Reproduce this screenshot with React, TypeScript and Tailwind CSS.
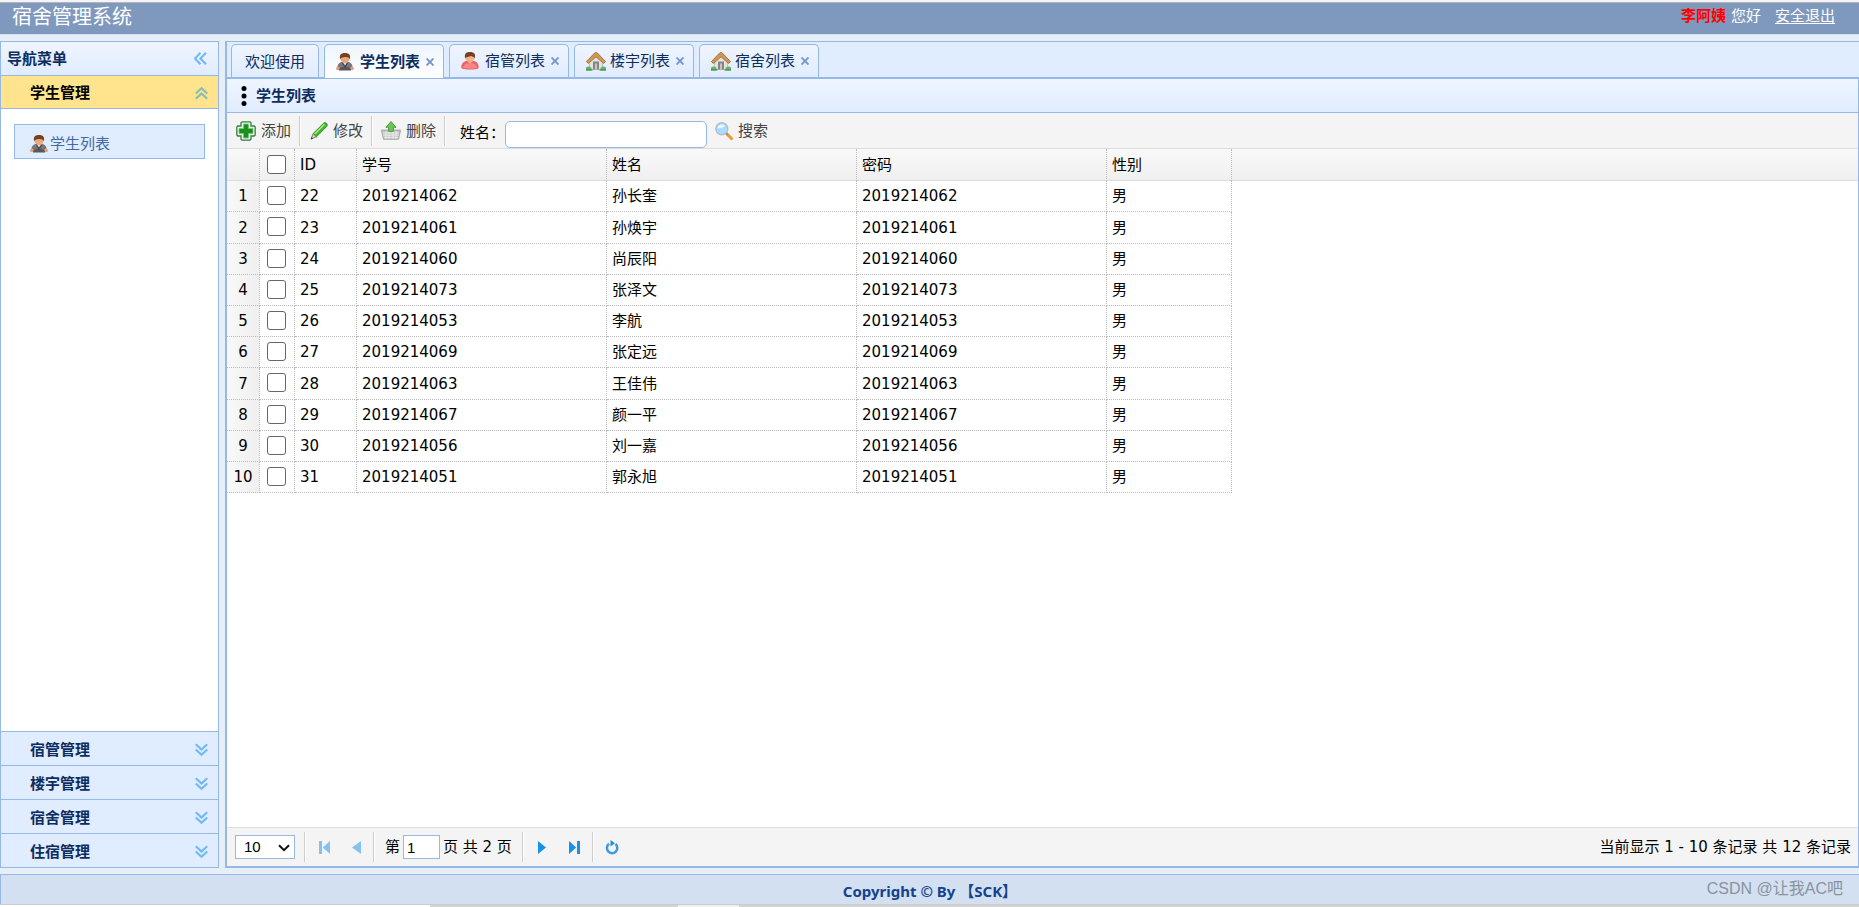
import React, { useState } from 'react';

interface Student {
  id: number;
  number: string;
  name: string;
  password: string;
  gender: string;
}

const students: Student[] = [
  { id: 22, number: '2019214062', name: '孙长奎', password: '2019214062', gender: '男' },
  { id: 23, number: '2019214061', name: '孙焕宇', password: '2019214061', gender: '男' },
  { id: 24, number: '2019214060', name: '尚辰阳', password: '2019214060', gender: '男' },
  { id: 25, number: '2019214073', name: '张泽文', password: '2019214073', gender: '男' },
  { id: 26, number: '2019214053', name: '李航', password: '2019214053', gender: '男' },
  { id: 27, number: '2019214069', name: '张定远', password: '2019214069', gender: '男' },
  { id: 28, number: '2019214063', name: '王佳伟', password: '2019214063', gender: '男' },
  { id: 29, number: '2019214067', name: '颜一平', password: '2019214067', gender: '男' },
  { id: 30, number: '2019214056', name: '刘一嘉', password: '2019214056', gender: '男' },
  { id: 31, number: '2019214051', name: '郭永旭', password: '2019214051', gender: '男' },
];

const StudentIcon = () => (
  <svg viewBox="0 0 18 18" className="h-[18px] w-[18px] shrink-0">
    <path d="M1.500 16.500C1 12 2.500 9.500 6 9h6c3.500.5 5 3 4.500 7.500z" fill="#77777b" />
    <path d="M0 15.500c0-2.200 3.800-2.400 4 0 .2 2.200-4 2.200-4 0zM14 15.500c.2-2.400 4-2.200 4 0 0 2.200-4.200 2.200-4 0z" fill="#e0a07a" />
    <path d="M3 17.500c-.3-2.500 2-3.800 6-3.800s6.300 1.300 6 3.800z" fill="#57575d" />
    <path d="M5.500 9.500 9 14.500l3.500-5z" fill="#3f3f46" />
    <path d="M6.800 9.200h4.400L9 12.500z" fill="#ece8e4" />
    <ellipse cx="9" cy="6" rx="4.400" ry="4.300" fill="#e8a880" />
    <path d="M4.200 6.500C3 2 5 0 9 0s6 2 4.800 6.500C13.500 4.800 12 4 9.500 4S4.700 4.700 4.200 6.500z" fill="#774020" />
  </svg>
);

const ManagerIcon = () => (
  <svg viewBox="0 0 18 18" className="h-[18px] w-[18px] shrink-0">
    <path d="M.3 16C0 12 2 9.500 5.500 9h7c3.500.5 5.500 3 5.200 7-1.500 2-15.900 2-17.400 0z" fill="#ed6468" />
    <path d="M2 15.500c1-3.200 3-4.200 7-4.200s6 1 7 4.200c-2 1.300-12 1.300-14 0z" fill="#fd8584" />
    <path d="M6 8.500h6L9 12z" fill="#eeb088" />
    <ellipse cx="9" cy="6" rx="4.400" ry="4.300" fill="#f0b48c" />
    <path d="M4.200 6.500C3 2 5 0 9 0s6 2 4.800 6.500C13.300 5 12 4.500 10 4 8 5 4.700 4.700 4.200 6.500z" fill="#774020" />
  </svg>
);

const HouseIcon = () => (
  <svg viewBox="0 0 20 19" className="h-[19px] w-5 shrink-0">
    <path d="M3.500 9 10 3l6.500 6v8.500h-13z" fill="#e5e3e2" stroke="#b5b0ac" strokeWidth=".7" />
    <path d="M7 9.500h6v8H7z" fill="#858487" />
    <path d="M9 11.500h2v6H9z" fill="#c9c5c2" />
    <path d="M0 15.500c2-1.500 4-1 5.500.5v2.500H0zM20 15.500c-2-1.500-4-1-5.500.5v2.500H20z" fill="#65b565" />
    <path d="M0 17.300h6.500v1.200H0zM13.500 17.300H20v1.200h-6.500z" fill="#3c9550" />
    <path d="M.4 9.600 8.600 1.100Q10-.2 11.400 1.100l8.200 8.500-2 1.900L10 4.800 2.400 11.500z" fill="#cf9854" stroke="#a06c36" strokeWidth=".9" />
  </svg>
);

const AddIcon = () => (
  <svg viewBox="0 0 20 20" className="h-5 w-5 shrink-0">
    <path d="M6 .8h8l1 1v3.200h3.200l1 1v8l-1 1H15v3.200l-1 1H6l-1-1V15H1.800l-1-1V6l1-1H5V1.800z" fill="#e7f5e5" stroke="#397c48" strokeWidth="1.300" />
    <path d="M7.500 3h5v4.500H17v5h-4.500V17h-5v-4.500H3v-5h4.500z" fill="#19911d" stroke="#7ac77a" strokeWidth=".8" />
  </svg>
);

const PencilIcon = () => (
  <svg viewBox="0 0 18 18" className="h-[18px] w-[18px] shrink-0">
    <path d="M1 17 3.200 11.500 6.500 14.800z" fill="#ddd5b0" stroke="#57743f" strokeWidth=".8" />
    <path d="M.7 17.400 1.600 15l1.500 1.500z" fill="#373b36" />
    <path d="M3.200 11.500 13.500 1.300Q15-.1 16.500 1.300t.2 3.200L6.500 14.800z" fill="#43b62f" stroke="#348c2b" strokeWidth=".9" />
    <path d="M4.700 12 14.500 2.300" stroke="#a9ed84" strokeWidth="1.500" />
  </svg>
);

const RemoveIcon = () => (
  <svg viewBox="0 0 20 19" className="h-[19px] w-5 shrink-0">
    <path d="M.5 9.500h19l-2 8.800h-15z" fill="#c6c6c6" stroke="#9b9b9b" strokeWidth=".8" />
    <path d="M2 12h16M2 14.200h16M3 16.400h14M5 10v8M8 10v8M12 10v8M15 10v8" stroke="#f1f1f1" strokeWidth=".8" />
    <path d="M.3 8.500h19.400v1.600H.3z" fill="#b0b0b0" />
    <path d="m10 .5 5 5.800h-2.600v4H7.600v-4H5z" fill="#6fc458" stroke="#3c9a3a" strokeWidth=".9" />
  </svg>
);

const SearchIcon = () => (
  <svg viewBox="0 0 18 18" className="h-[18px] w-[18px] shrink-0">
    <path d="m11 11 5.500 5.500" stroke="#ec9a31" strokeWidth="3" strokeLinecap="round" />
    <path d="m10.800 10.800 1.800 1.800" stroke="#8c8c91" strokeWidth="1.800" />
    <circle cx="6.800" cy="6.800" r="6" fill="#a9dcff" stroke="#b5bcd0" strokeWidth="1.400" />
    <path d="M2.500 6.500C3 3.500 5 2.200 7.500 2.500s3 2 .8 2.700-3.500.6-5.800 1.300z" fill="#eaf8ff" />
  </svg>
);

const MoreIcon = () => (
  <svg viewBox="0 0 6 20" className="h-5 w-1.5 shrink-0">
    <circle cx="3" cy="2.500" r="2.500" />
    <circle cx="3" cy="10" r="2.500" />
    <circle cx="3" cy="17.500" r="2.500" />
  </svg>
);

const chevrons = {
  left: 'M6.500.8.9 6.500l5.600 5.700M12 .8 6.400 6.500l5.600 5.700',
  up: 'M.8 6.500 6.500 1.200l5.700 5.300M.8 11.800 6.500 6.500l5.700 5.300',
  down: 'M.8 1.200 6.500 6.500l5.700-5.300M.8 6.500l5.700 5.300 5.700-5.300',
};

const Chevrons = ({ to, color = '#72b9f2' }: { to: keyof typeof chevrons; color?: string }) => (
  <svg viewBox="0 0 13 13" className="h-[13px] w-[13px] shrink-0">
    <path d={chevrons[to]} fill="none" stroke={color} strokeWidth="2.100" />
  </svg>
);

const tabs = [
  { title: '学生列表', icon: <StudentIcon />, active: true },
  { title: '宿管列表', icon: <ManagerIcon />, active: false },
  { title: '楼宇列表', icon: <HouseIcon />, active: false },
  { title: '宿舍列表', icon: <HouseIcon />, active: false },
];

const Header = () => (
  <header>
    <div className="h-[3px] border-b border-[#b5b5b5] bg-[#f5f5f5]" />
    <div className="flex h-8 items-start justify-between border-b border-[#d2e0f2] bg-[#7f99be] pl-3 pr-6 text-white">
      <h1 className="text-xl leading-7">宿舍管理系统</h1>
      <div className="flex leading-[26px]">
        <b className="mr-[5px] text-[#ff0000]">李阿姨</b>
        <span className="mr-3.5">您好</span>
        <a href="#logout" className="underline underline-offset-2">安全退出</a>
      </div>
    </div>
  </header>
);

const Sidebar = () => (
  <aside className="flex w-[219px] shrink-0 flex-col border border-[#95b8e7] bg-white font-bold text-[#0e2d5f]">
    <div className="flex h-[34px] items-center justify-between border-b border-[#95b8e7] bg-linear-to-b from-[#eff5ff] to-[#e0ecff] pl-1.5 pr-[11px]">
      <h2>导航菜单</h2>
      <button aria-label="折叠菜单"><Chevrons to="left" /></button>
    </div>
    <button className="flex h-[33px] items-center justify-between border-b border-[#95b8e7] bg-[#ffe48d] pl-[29px] pr-[10px] pt-0.5 text-black">
      学生管理
      <Chevrons to="up" color="#86bdb4" />
    </button>
    <div className="flex-1 px-[13px] py-[15px] font-normal">
      <a href="#students" className="flex h-[35px] items-center gap-0.5 border border-[#95b8e7] bg-[#e0ecff] pl-[15px] pt-1 text-[#416aa3]">
        <StudentIcon />
        学生列表
      </a>
    </div>
    {['宿管管理', '楼宇管理', '宿舍管理', '住宿管理'].map((title) => (
      <button key={title} className="flex h-[34px] items-center justify-between border-t border-[#95b8e7] bg-[#e0ecff] pl-[29px] pr-[10px] pt-0.5">
        {title}
        <Chevrons to="down" />
      </button>
    ))}
  </aside>
);

const TabBar = () => (
  <nav className="flex h-[36px] items-end gap-[5px] border-b border-[#95b8e7] bg-[#e0ecff] pl-1 text-[#0e2d5f]">
    <button className="h-[33px] rounded-t-[5px] border border-b-0 border-[#95b8e7] bg-linear-to-b from-[#eff5ff] to-[#e0ecff] px-[13px] pt-0.5">
      欢迎使用
    </button>
    {tabs.map((tab) => (
      <div
        key={tab.title}
        className={`flex items-center rounded-t-[5px] border border-b-0 border-[#95b8e7] bg-linear-to-b from-[#eff5ff] pl-[11px] pr-[9px] ${
          tab.active ? '-mb-px h-[34px] to-white font-bold' : 'h-[33px] to-[#e0ecff]'
        }`}
      >
        <button className="flex w-[84px] items-center justify-between">
          {tab.icon}
          {tab.title}
        </button>
        <button aria-label={`关闭${tab.title}`} className="ml-1.5">
          <svg viewBox="0 0 8 8" className="h-2 w-2">
            <path d="m.5.5 7 7M7.500.5l-7 7" stroke="#7596cb" strokeWidth="1.900" />
          </svg>
        </button>
      </div>
    ))}
  </nav>
);

const Separator = () => <span className="h-[30px] w-0.5 shrink-0 border-l border-r border-l-[#ccc] border-r-white" />;

const Toolbar = () => (
  <div className="flex h-9 items-center border-b border-[#ddd] bg-[#f4f4f4] pl-[9px] text-[#444]">
    <button className="mr-2 flex items-center gap-[5px]"><AddIcon />添加</button>
    <Separator />
    <button className="ml-[9px] mr-2 flex items-center gap-[5px]"><PencilIcon />修改</button>
    <Separator />
    <button className="ml-2 mr-2 flex items-center gap-[5px]"><RemoveIcon />删除</button>
    <Separator />
    <label htmlFor="name" className="ml-3.5 w-[45px] whitespace-nowrap pt-1 text-black">姓名：</label>
    <input
      id="name"
      type="text"
      className="h-[27px] w-[202px] self-end rounded-[5px] border border-[#95b8e7] bg-white px-1 text-black outline-none"
    />
    <button className="ml-2 flex items-center gap-[5px]"><SearchIcon />搜索</button>
  </div>
);

const cell = 'border-b border-r border-dotted border-[#bbb] px-[5px]';
const headCell = 'border-r border-dotted border-r-[#bbb] px-[5px] font-normal';
const checkbox = 'block h-[19px] w-[19px] appearance-none rounded-[3px] border border-[#666] bg-white checked:bg-[#0075ff]';

const StudentTable = () => {
  const [selected, setSelected] = useState<number[]>([]);

  const toggle = (id: number) => {
    setSelected(selected.includes(id) ? selected.filter((s) => s !== id) : [...selected, id]);
  };

  return (
    <table className="w-full table-fixed border-separate border-spacing-0 text-left text-black">
      <colgroup>
        <col className="w-[33px]" />
        <col className="w-[35px]" />
        <col className="w-[62px]" />
        <col className="w-[250px]" />
        <col className="w-[250px]" />
        <col className="w-[250px]" />
        <col className="w-[125px]" />
        <col />
      </colgroup>
      <thead>
        <tr className="h-8 bg-linear-to-b from-[#f9f9f9] to-[#efefef] [&>th]:shadow-[inset_0_-1px_0_#ddd]">
          <th className={headCell}></th>
          <th className={`${headCell} pb-0.5 pl-[7px]`}>
            <input
              type="checkbox"
              aria-label="全选"
              className={checkbox}
              checked={selected.length === students.length}
              onChange={() => setSelected(selected.length === students.length ? [] : students.map((s) => s.id))}
            />
          </th>
          <th className={headCell}>ID</th>
          <th className={headCell}>学号</th>
          <th className={headCell}>姓名</th>
          <th className={headCell}>密码</th>
          <th className={headCell}>性别</th>
          <th></th>
        </tr>
      </thead>
      <tbody>
        {students.map((student, index) => (
          <tr key={student.id} className={index % 5 === 1 ? 'h-8' : 'h-[31px]'}>
            <td className="border-b border-r border-dotted border-[#bbb] bg-linear-to-r from-[#f9f9f9] to-[#efefef] text-center">
              {index + 1}
            </td>
            <td className={`${cell} pb-0.5 pl-[7px]`}>
              <input
                type="checkbox"
                aria-label={`选择${student.name}`}
                className={checkbox}
                checked={selected.includes(student.id)}
                onChange={() => toggle(student.id)}
              />
            </td>
            <td className={cell}>{student.id}</td>
            <td className={cell}>{student.number}</td>
            <td className={cell}>{student.name}</td>
            <td className={cell}>{student.password}</td>
            <td className={cell}>{student.gender}</td>
            <td></td>
          </tr>
        ))}
      </tbody>
    </table>
  );
};

const Pagination = () => (
  <div className="flex h-[39px] items-center border-t border-[#ddd] bg-[#f4f4f4] pl-2 pr-[7px] text-black">
    <div className="relative mr-[9px]">
      <select
        aria-label="每页条数"
        className="block h-6 w-[60px] appearance-none border border-[#95b8e7] bg-white pl-2 font-['Liberation_Sans',sans-serif]"
      >
        <option>10</option>
        <option>20</option>
        <option>50</option>
      </select>
      <svg viewBox="0 0 12 8" className="pointer-events-none absolute right-[5px] top-[9px] h-2 w-3">
        <path d="m1 1.200 5 5 5-5" fill="none" stroke="#111" strokeWidth="2" />
      </svg>
    </div>
    <Separator />
    <button aria-label="首页" className="ml-[13px]">
      <svg viewBox="0 0 11 13" className="h-[13px] w-[11px] fill-[#84c3f0]"><path d="M0 0h3v13H0zM11 0v13L3.800 6.500z" /></svg>
    </button>
    <button aria-label="上一页" className="ml-[22px] mr-3">
      <svg viewBox="0 0 9 13" className="h-[13px] w-[9px] fill-[#84c3f0]"><path d="M9 0v13L0 6.500z" /></svg>
    </button>
    <Separator />
    <label htmlFor="page" className="ml-[10px] mr-[3px]">第</label>
    <input id="page" type="text" defaultValue="1" className="mr-[3px] h-6 w-[37px] border border-[#95b8e7] bg-white px-[3px] font-['Liberation_Sans',sans-serif] outline-none" />
    <span className="mr-2.5 whitespace-nowrap">页 共 2 页</span>
    <Separator />
    <button aria-label="下一页" className="ml-3.5">
      <svg viewBox="0 0 8 13" className="h-[13px] w-2 fill-[#1a91e8]"><path d="M0 0v13l8-6.500z" /></svg>
    </button>
    <button aria-label="末页" className="ml-[23px] mr-3">
      <svg viewBox="0 0 11 13" className="h-[13px] w-[11px] fill-[#1a91e8]"><path d="M8 0h3v13H8zM0 0v13l7.200-6.500z" /></svg>
    </button>
    <Separator />
    <button aria-label="刷新" className="ml-[11px]">
      <svg viewBox="0 0 14 15" className="h-[15px] w-3.5">
        <path d="M4 3.800A5.200 5.200 0 1 0 10.500 4" fill="none" stroke="#3d9be0" strokeWidth="2.500" />
        <path d="m5.500 0 4.500 3.300-4.500 3.300z" fill="#2d8ad0" />
      </svg>
    </button>
    <span className="ml-auto whitespace-nowrap">当前显示 1 - 10 条记录 共 12 条记录</span>
  </div>
);

const Footer = () => (
  <footer>
    <div className="relative flex h-[30px] items-center justify-center border-l border-t border-[#95b8e7] bg-[#d2e0f2]">
      <span className="pt-0.5 font-['Noto_Sans','Noto_Sans_CJK_SC',sans-serif] font-bold text-[#15428b]">Copyright © By 【SCK】</span>
      <span className="absolute right-4 top-0 font-['Liberation_Sans','Noto_Sans_CJK_SC',sans-serif] text-base leading-7 text-[#8b929c]">
        CSDN @让我AC吧
      </span>
    </div>
    <div className="flex h-[3px] border-t border-[#ccc] bg-[#d3d3d3]">
      <div className="w-[430px] bg-white" />
      <div className="ml-[248px] w-[61px] bg-[#efefef]" />
    </div>
  </footer>
);

const App: React.FC = () => {
  return (
    <div className="flex min-h-screen flex-col bg-[#e6eef8] font-['DejaVu_Sans','Noto_Sans_CJK_SC',sans-serif] text-[15px] leading-5">
      <Header />
      <div className="flex flex-1 gap-1.5 py-1.5">
        <Sidebar />
        <main className="flex min-w-0 flex-1 flex-col border-l-2 border-t border-[#95b8e7] bg-white">
          <TabBar />
          <section className="flex flex-1 flex-col border-b-2 border-r border-t border-[#95b8e7]">
            <div className="flex h-[34px] items-center gap-[9px] border-b border-[#95b8e7] bg-linear-to-b from-[#eff5ff] to-[#e0ecff] pl-3.5 font-bold text-[#0e2d5f]">
              <MoreIcon />
              <h2>学生列表</h2>
            </div>
            <Toolbar />
            <div className="flex-1">
              <StudentTable />
            </div>
            <Pagination />
          </section>
        </main>
      </div>
      <Footer />
    </div>
  );
};

export default App;
